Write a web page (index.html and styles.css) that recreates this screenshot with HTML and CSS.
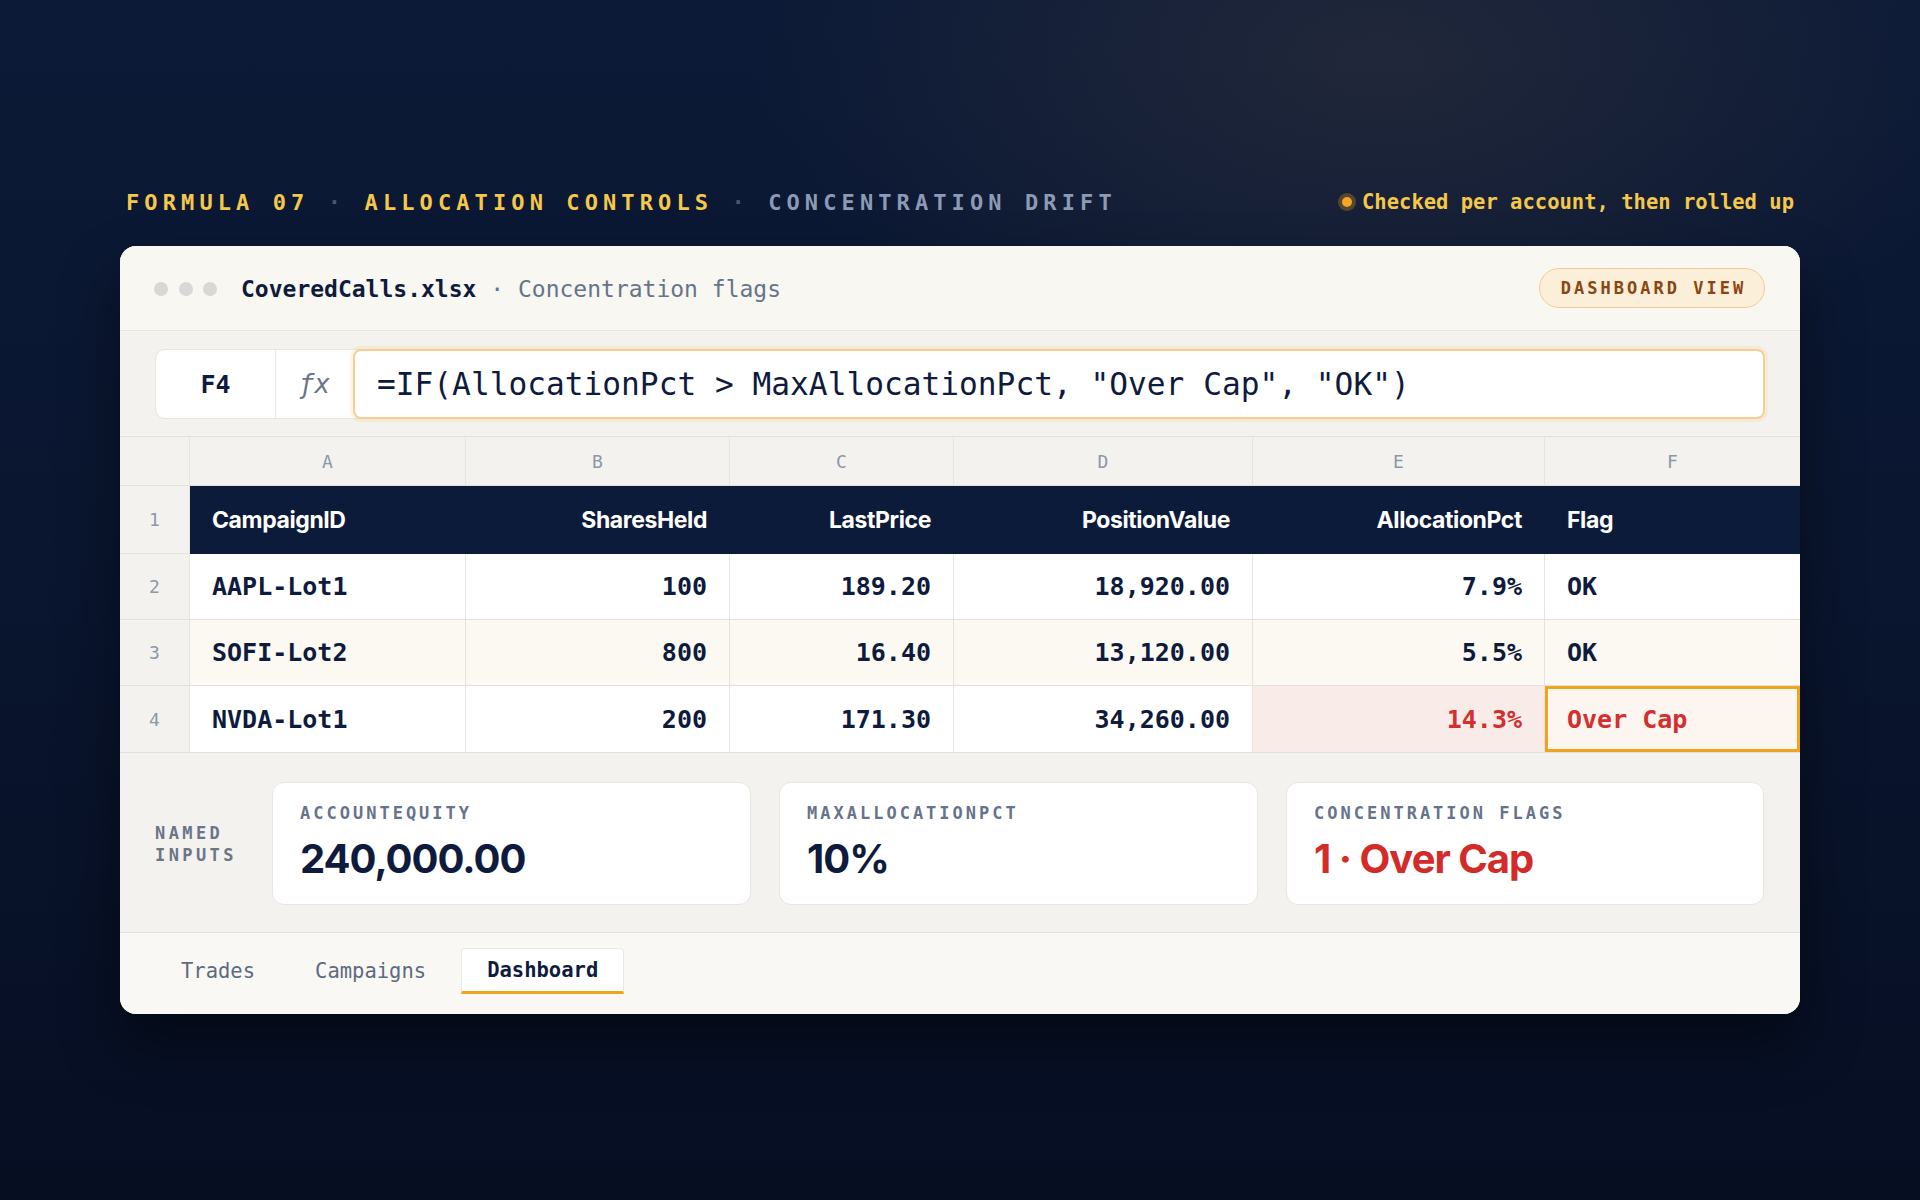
FILE: index.html
```html
<!DOCTYPE html>
<html lang="en">
<head>
  <meta charset="UTF-8">
  <meta name="viewport" content="width=device-width, initial-scale=1.0">
  <title>CoveredCalls.xlsx · Concentration flags</title>
  <link rel="stylesheet" href="styles.css">
</head>
<body>
  <main class="stage">
    <div class="caption">
      <div class="kicker">
        <span class="hl">FORMULA 07</span> <span class="sep">·</span> <span class="hl">ALLOCATION CONTROLS</span> <span class="sep">·</span> <span class="dim">CONCENTRATION DRIFT</span>
      </div>
      <div class="note"><span class="note-dot"></span>Checked per account, then rolled up</div>
    </div>

    <section class="sheet">
      <div class="titlebar">
        <div class="lights"><i></i><i></i><i></i></div>
        <div class="doc"><b>CoveredCalls.xlsx</b> · Concentration flags</div>
        <span class="badge">DASHBOARD VIEW</span>
      </div>

      <div class="formula-area">
        <div class="formula-bar">
          <div class="cell-ref">F4</div>
          <div class="fx">ƒx</div>
          <div class="formula">=IF(AllocationPct &gt; MaxAllocationPct, "Over Cap", "OK")</div>
        </div>
      </div>

      <div class="grid">
        <div class="row letters">
          <div class="rn"></div>
          <div>A</div><div>B</div><div>C</div><div>D</div><div>E</div><div>F</div>
        </div>
        <div class="row head">
          <div class="rn">1</div>
          <div class="c">CampaignID</div>
          <div class="c num">SharesHeld</div>
          <div class="c num">LastPrice</div>
          <div class="c num">PositionValue</div>
          <div class="c num">AllocationPct</div>
          <div class="c">Flag</div>
        </div>
        <div class="row data">
          <div class="rn">2</div>
          <div class="c">AAPL-Lot1</div>
          <div class="c num">100</div>
          <div class="c num">189.20</div>
          <div class="c num">18,920.00</div>
          <div class="c num">7.9%</div>
          <div class="c">OK</div>
        </div>
        <div class="row data alt">
          <div class="rn">3</div>
          <div class="c">SOFI-Lot2</div>
          <div class="c num">800</div>
          <div class="c num">16.40</div>
          <div class="c num">13,120.00</div>
          <div class="c num">5.5%</div>
          <div class="c">OK</div>
        </div>
        <div class="row data">
          <div class="rn">4</div>
          <div class="c">NVDA-Lot1</div>
          <div class="c num">200</div>
          <div class="c num">171.30</div>
          <div class="c num">34,260.00</div>
          <div class="c num warn">14.3%</div>
          <div class="c active">Over Cap</div>
        </div>
      </div>

      <div class="named">
        <div class="named-label">NAMED<br>INPUTS</div>
        <div class="card">
          <div class="card-label">ACCOUNTEQUITY</div>
          <div class="card-value">240,000.00</div>
        </div>
        <div class="card">
          <div class="card-label">MAXALLOCATIONPCT</div>
          <div class="card-value">10%</div>
        </div>
        <div class="card">
          <div class="card-label">CONCENTRATION FLAGS</div>
          <div class="card-value red">1 · Over Cap</div>
        </div>
      </div>

      <nav class="tabs">
        <span class="tab">Trades</span>
        <span class="tab">Campaigns</span>
        <span class="tab on">Dashboard</span>
      </nav>
    </section>
  </main>
</body>
</html>
```

FILE: styles.css
```css
body {
  margin: 0;
  min-height: 1200px;
  background:
    radial-gradient(ellipse 900px 500px at 1380px 60px, rgba(58, 56, 62, 0.45), transparent 70%),
    linear-gradient(180deg, #0c1a37 0%, #0a1630 45%, #060e22 100%);
  font-family: "DejaVu Sans Mono", monospace;
  color: #0f1b3d;
}

.stage {
  width: 1680px;
  margin: 0 auto;
  padding-top: 187px;
}

/* caption line above the sheet */
.caption {
  display: flex;
  justify-content: space-between;
  align-items: center;
  padding: 0 6px;
  height: 30px;
  margin-bottom: 29px;
}

.kicker {
  font-size: 22px;
  font-weight: bold;
  letter-spacing: 5.1px;
  white-space: nowrap;
}

.kicker .hl { color: #f5c84c; }
.kicker .dim { color: #8c9ab6; }
.kicker .sep { color: #4b5770; }

.note {
  display: flex;
  align-items: center;
  gap: 10px;
  font-size: 20.5px;
  font-weight: bold;
  color: #f5c84c;
}

.note-dot {
  width: 10px;
  height: 10px;
  border-radius: 50%;
  background: #f5a623;
  box-shadow: 0 0 0 4px rgba(245, 166, 35, 0.28);
}

/* window */
.sheet {
  background: #f3f2ee;
  border-radius: 16px;
  overflow: hidden;
  box-shadow: 0 30px 60px rgba(0, 0, 0, 0.45);
}

.titlebar {
  height: 85px;
  display: flex;
  align-items: center;
  padding: 2px 35px 0 34px;
  background: #f8f7f2;
  border-bottom: 1px solid #e6e4de;
  box-sizing: border-box;
}

.lights {
  display: flex;
  gap: 10.5px;
  margin-right: 24px;
}

.lights i {
  width: 14px;
  height: 14px;
  border-radius: 50%;
  background: #d8d8d6;
}

.doc {
  font-size: 23px;
  color: #66738a;
  white-space: nowrap;
}

.doc b { color: #0f1b3d; }

.badge {
  margin-left: auto;
  margin-top: -2px;
  height: 40px;
  width: 226px;
  box-sizing: border-box;
  display: flex;
  align-items: center;
  justify-content: center;
  border-radius: 20px;
  background: #fcefd9;
  border: 1px solid #f1cd94;
  color: #8a4510;
  font-size: 17px;
  font-weight: bold;
  letter-spacing: 3px;
  padding-left: 3px;
}

/* formula bar */
.formula-area {
  padding: 18px 35px 17px;
  border-bottom: 1px solid #e3e1db;
}

.formula-bar {
  display: flex;
  height: 70px;
  background: #fff;
  border: 1px solid #e8e5de;
  border-radius: 10px;
  box-sizing: border-box;
}

.cell-ref {
  width: 119px;
  display: flex;
  align-items: center;
  justify-content: center;
  font-size: 25px;
  font-weight: bold;
  border-right: 1px solid #ebe8e2;
}

.fx {
  width: 77px;
  display: flex;
  align-items: center;
  justify-content: center;
  font-size: 26px;
  font-style: italic;
  color: #6b7588;
}

.formula {
  flex: 1;
  display: flex;
  align-items: center;
  margin: -1px -1px -1px 0;
  padding-left: 22px;
  border: 2px solid #f5cf92;
  border-radius: 8px;
  box-shadow: 0 0 0 3px rgba(245, 190, 100, 0.15);
  font-size: 31.2px;
  white-space: nowrap;
}

/* spreadsheet grid */
.row {
  display: grid;
  grid-template-columns: 70px 276px 264px 224px 299px 292px 1fr;
}

.row > div {
  border-right: 1px solid #e6e4de;
  border-bottom: 1px solid #e3e1db;
  display: flex;
  align-items: center;
  box-sizing: border-box;
}

.row > div:last-child { border-right: 0; }

.rn {
  justify-content: center;
  background: #f3f2ee;
  color: #8d97a8;
  font-size: 18px;
}

.letters {
  height: 49px;
  background: #f3f2ee;
}

.letters > div {
  justify-content: center;
  color: #8d97a8;
  font-size: 18px;
}

.head { height: 68px; }

.head .c {
  background: #0d1b3a;
  color: #fff;
  border-color: #0d1b3a;
  font-family: Inter, "Liberation Sans", sans-serif;
  font-weight: 700;
  font-size: 23px;
  letter-spacing: -0.4px;
}

.c {
  padding: 0 22px;
}

.c.num { justify-content: flex-end; }

.data { height: 66px; }

.data .c {
  background: #fff;
  font-size: 25px;
  font-weight: bold;
}

.data.alt .c { background: #fbf9f1; }

.data:last-child > div { height: 67px; }

.data .c.warn {
  background: #f9ece8;
  color: #d32f2f;
}

.data .c.active {
  background: #fdf5ef;
  color: #d32f2f;
  box-shadow: inset 0 0 0 3px #f0a41e;
}

/* named inputs */
.named {
  display: grid;
  grid-template-columns: 89px 479px 479px 478px;
  column-gap: 28px;
  align-items: center;
  padding: 29px 36px 27px 35px;
  border-top: 1px solid #e3e1db;
}

.named-label {
  font-size: 17px;
  font-weight: bold;
  letter-spacing: 3.4px;
  line-height: 22px;
  color: #6b7588;
  white-space: nowrap;
}

.card {
  background: #fff;
  border: 1px solid #e9e6df;
  border-radius: 12px;
  height: 123px;
  box-sizing: border-box;
  padding: 19px 27px 0;
}

.card-label {
  font-size: 17px;
  font-weight: bold;
  letter-spacing: 3px;
  line-height: 22px;
  color: #66738a;
  white-space: nowrap;
}

.card-value {
  margin-top: 11px;
  font-family: Inter, "Liberation Sans", sans-serif;
  font-weight: 700;
  font-size: 40px;
  line-height: 48px;
  letter-spacing: -1px;
  color: #0f1b3d;
}

.card-value.red { color: #d32a2a; }

/* sheet tabs */
.tabs {
  height: 82px;
  display: flex;
  align-items: flex-start;
  gap: 10px;
  padding: 15px 0 0 36px;
  background: #f9f8f4;
  border-top: 1px solid #e3e1db;
  box-sizing: border-box;
}

.tab {
  height: 46px;
  display: flex;
  align-items: center;
  padding: 0 25px;
  font-size: 20.5px;
  color: #5d6a80;
  box-sizing: border-box;
}

.tab.on {
  background: #fff;
  color: #0f1b3d;
  font-weight: bold;
  border: 1px solid #ebe8e1;
  border-bottom: 3px solid #f0a41e;
  border-radius: 4px 4px 0 0;
}
```
